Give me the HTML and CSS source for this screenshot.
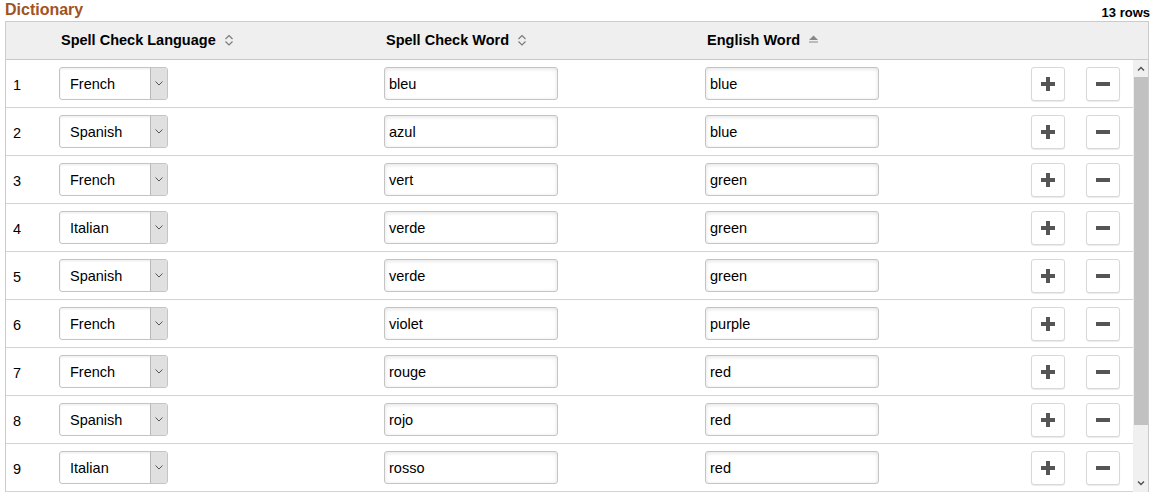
FILE: index.html
```html
<!DOCTYPE html>
<html>
<head>
<meta charset="utf-8">
<link rel="stylesheet" href="styles.css">
</head>
<body>
<div class="page">
  <div class="titlebar">
    <h1 class="title">Dictionary</h1>
    <span class="count">13 rows</span>
  </div>
  <div class="grid">
    <div class="row head">
      <div class="c num"></div>
      <div class="c">Spell Check Language <svg class="sort" width="10" height="14" viewBox="0 0 10 14"><polyline points="1.5,6 5,2.5 8.5,6" fill="none" stroke="#777" stroke-width="1.1"/><polyline points="1.5,8.5 5,12 8.5,8.5" fill="none" stroke="#777" stroke-width="1.1"/></svg></div>
      <div class="c">Spell Check Word <svg class="sort" width="10" height="14" viewBox="0 0 10 14"><polyline points="1.5,6 5,2.5 8.5,6" fill="none" stroke="#777" stroke-width="1.1"/><polyline points="1.5,8.5 5,12 8.5,8.5" fill="none" stroke="#777" stroke-width="1.1"/></svg></div>
      <div class="c">English Word <svg class="sort" width="11" height="14" viewBox="0 0 11 14"><polygon points="1,7 5.5,2.5 10,7" fill="#888"/><line x1="1" y1="9" x2="10" y2="9" stroke="#888" stroke-width="1"/></svg></div>
      <div class="c"></div>
      <div class="c"></div>
    </div>
    <div class="body">
      <div class="rows" id="rows">
        <div class="row"><div class="c num">1</div><div class="c"><div class="sel"><span class="sv">French</span><span class="dd"><svg width="8" height="5" viewBox="0 0 8 5"><polyline points="0.5,0.5 4,4 7.5,0.5" fill="none" stroke="#555" stroke-width="1"/></svg></span></div></div><div class="c"><div class="inp">bleu</div></div><div class="c"><div class="inp">blue</div></div><div class="c"><div class="btn"><svg width="16" height="16" viewBox="0 0 16 16"><rect x="6" y="1" width="4" height="14" fill="#555"/><rect x="1" y="6" width="14" height="4" fill="#555"/></svg></div></div><div class="c"><div class="btn"><svg width="16" height="16" viewBox="0 0 16 16"><rect x="1" y="6" width="14" height="4" fill="#555"/></svg></div></div></div>
        <div class="row"><div class="c num">2</div><div class="c"><div class="sel"><span class="sv">Spanish</span><span class="dd"><svg width="8" height="5" viewBox="0 0 8 5"><polyline points="0.5,0.5 4,4 7.5,0.5" fill="none" stroke="#555" stroke-width="1"/></svg></span></div></div><div class="c"><div class="inp">azul</div></div><div class="c"><div class="inp">blue</div></div><div class="c"><div class="btn"><svg width="16" height="16" viewBox="0 0 16 16"><rect x="6" y="1" width="4" height="14" fill="#555"/><rect x="1" y="6" width="14" height="4" fill="#555"/></svg></div></div><div class="c"><div class="btn"><svg width="16" height="16" viewBox="0 0 16 16"><rect x="1" y="6" width="14" height="4" fill="#555"/></svg></div></div></div>
        <div class="row"><div class="c num">3</div><div class="c"><div class="sel"><span class="sv">French</span><span class="dd"><svg width="8" height="5" viewBox="0 0 8 5"><polyline points="0.5,0.5 4,4 7.5,0.5" fill="none" stroke="#555" stroke-width="1"/></svg></span></div></div><div class="c"><div class="inp">vert</div></div><div class="c"><div class="inp">green</div></div><div class="c"><div class="btn"><svg width="16" height="16" viewBox="0 0 16 16"><rect x="6" y="1" width="4" height="14" fill="#555"/><rect x="1" y="6" width="14" height="4" fill="#555"/></svg></div></div><div class="c"><div class="btn"><svg width="16" height="16" viewBox="0 0 16 16"><rect x="1" y="6" width="14" height="4" fill="#555"/></svg></div></div></div>
        <div class="row"><div class="c num">4</div><div class="c"><div class="sel"><span class="sv">Italian</span><span class="dd"><svg width="8" height="5" viewBox="0 0 8 5"><polyline points="0.5,0.5 4,4 7.5,0.5" fill="none" stroke="#555" stroke-width="1"/></svg></span></div></div><div class="c"><div class="inp">verde</div></div><div class="c"><div class="inp">green</div></div><div class="c"><div class="btn"><svg width="16" height="16" viewBox="0 0 16 16"><rect x="6" y="1" width="4" height="14" fill="#555"/><rect x="1" y="6" width="14" height="4" fill="#555"/></svg></div></div><div class="c"><div class="btn"><svg width="16" height="16" viewBox="0 0 16 16"><rect x="1" y="6" width="14" height="4" fill="#555"/></svg></div></div></div>
        <div class="row"><div class="c num">5</div><div class="c"><div class="sel"><span class="sv">Spanish</span><span class="dd"><svg width="8" height="5" viewBox="0 0 8 5"><polyline points="0.5,0.5 4,4 7.5,0.5" fill="none" stroke="#555" stroke-width="1"/></svg></span></div></div><div class="c"><div class="inp">verde</div></div><div class="c"><div class="inp">green</div></div><div class="c"><div class="btn"><svg width="16" height="16" viewBox="0 0 16 16"><rect x="6" y="1" width="4" height="14" fill="#555"/><rect x="1" y="6" width="14" height="4" fill="#555"/></svg></div></div><div class="c"><div class="btn"><svg width="16" height="16" viewBox="0 0 16 16"><rect x="1" y="6" width="14" height="4" fill="#555"/></svg></div></div></div>
        <div class="row"><div class="c num">6</div><div class="c"><div class="sel"><span class="sv">French</span><span class="dd"><svg width="8" height="5" viewBox="0 0 8 5"><polyline points="0.5,0.5 4,4 7.5,0.5" fill="none" stroke="#555" stroke-width="1"/></svg></span></div></div><div class="c"><div class="inp">violet</div></div><div class="c"><div class="inp">purple</div></div><div class="c"><div class="btn"><svg width="16" height="16" viewBox="0 0 16 16"><rect x="6" y="1" width="4" height="14" fill="#555"/><rect x="1" y="6" width="14" height="4" fill="#555"/></svg></div></div><div class="c"><div class="btn"><svg width="16" height="16" viewBox="0 0 16 16"><rect x="1" y="6" width="14" height="4" fill="#555"/></svg></div></div></div>
        <div class="row"><div class="c num">7</div><div class="c"><div class="sel"><span class="sv">French</span><span class="dd"><svg width="8" height="5" viewBox="0 0 8 5"><polyline points="0.5,0.5 4,4 7.5,0.5" fill="none" stroke="#555" stroke-width="1"/></svg></span></div></div><div class="c"><div class="inp">rouge</div></div><div class="c"><div class="inp">red</div></div><div class="c"><div class="btn"><svg width="16" height="16" viewBox="0 0 16 16"><rect x="6" y="1" width="4" height="14" fill="#555"/><rect x="1" y="6" width="14" height="4" fill="#555"/></svg></div></div><div class="c"><div class="btn"><svg width="16" height="16" viewBox="0 0 16 16"><rect x="1" y="6" width="14" height="4" fill="#555"/></svg></div></div></div>
        <div class="row"><div class="c num">8</div><div class="c"><div class="sel"><span class="sv">Spanish</span><span class="dd"><svg width="8" height="5" viewBox="0 0 8 5"><polyline points="0.5,0.5 4,4 7.5,0.5" fill="none" stroke="#555" stroke-width="1"/></svg></span></div></div><div class="c"><div class="inp">rojo</div></div><div class="c"><div class="inp">red</div></div><div class="c"><div class="btn"><svg width="16" height="16" viewBox="0 0 16 16"><rect x="6" y="1" width="4" height="14" fill="#555"/><rect x="1" y="6" width="14" height="4" fill="#555"/></svg></div></div><div class="c"><div class="btn"><svg width="16" height="16" viewBox="0 0 16 16"><rect x="1" y="6" width="14" height="4" fill="#555"/></svg></div></div></div>
        <div class="row"><div class="c num">9</div><div class="c"><div class="sel"><span class="sv">Italian</span><span class="dd"><svg width="8" height="5" viewBox="0 0 8 5"><polyline points="0.5,0.5 4,4 7.5,0.5" fill="none" stroke="#555" stroke-width="1"/></svg></span></div></div><div class="c"><div class="inp">rosso</div></div><div class="c"><div class="inp">red</div></div><div class="c"><div class="btn"><svg width="16" height="16" viewBox="0 0 16 16"><rect x="6" y="1" width="4" height="14" fill="#555"/><rect x="1" y="6" width="14" height="4" fill="#555"/></svg></div></div><div class="c"><div class="btn"><svg width="16" height="16" viewBox="0 0 16 16"><rect x="1" y="6" width="14" height="4" fill="#555"/></svg></div></div></div>
      </div>
      <div class="sbar">
        <div class="sarrow"><svg width="8" height="5" viewBox="0 0 8 5"><polyline points="1,4.5 4,1.5 7,4.5" fill="none" stroke="#505050" stroke-width="1.4"/></svg></div>
        <div class="strack"><div class="sthumb"></div></div>
        <div class="sarrow"><svg width="8" height="5" viewBox="0 0 8 5"><polyline points="1,0.5 4,3.5 7,0.5" fill="none" stroke="#505050" stroke-width="1.4"/></svg></div>
      </div>
    </div>
  </div>
</div>
</body>
</html>
```

FILE: styles.css
```css
* { box-sizing: border-box; }
html, body { margin: 0; padding: 0; background: #fff; }
body {
  font-family: "Liberation Sans", Arial, sans-serif;
  color: #000;
  overflow: hidden;
}
.page {
  padding-left: 5px;
  width: 1149px;
}
.titlebar {
  height: 21px;
  display: flex;
  justify-content: space-between;
  align-items: flex-start;
}
.title {
  margin: 0;
  font-size: 16px;
  line-height: 19px;
  font-weight: bold;
  color: #a0531f;
}
.count {
  font-size: 13px;
  font-weight: bold;
  margin-top: 5px;
  line-height: 16px;
  margin-right: -1px;
}
.grid {
  border: 1px solid #cbcbcb;
  border-bottom: none;
  width: 1144px;
}
.row {
  display: grid;
  grid-template-columns: 53px 325px 321px 326px 55px 47px;
  height: 48px;
  border-bottom: 1px solid #d4d4d4;
  align-items: center;
  font-size: 14.5px;
}
.row.head {
  height: 38px;
  background: #efefef;
  border-bottom: 1px solid #c8c8c8;
  font-weight: bold;
  padding-bottom: 2px;
  grid-template-columns: 53px 325px 321px 327px 55px 61px;
}
.head .c {
  padding-left: 2px;
  display: flex;
  align-items: center;
  white-space: nowrap;
}
.sort { margin-left: 8px; }
.c.num { padding-left: 7px; padding-top: 2px; }
.body {
  display: flex;
  height: 432px;
  overflow: hidden;
}
.rows { width: 1127px; }
.sel {
  width: 109px;
  height: 33px;
  border: 1px solid #c4c4c4;
  border-radius: 3px;
  display: flex;
  box-shadow: inset 0 1px 3px rgba(0,0,0,0.08);
  background: #fff;
  overflow: hidden;
}
.sv {
  flex: 1;
  padding-left: 10px;
  line-height: 33px;
}
.dd {
  width: 17px;
  background: #e0e0e0;
  border-left: 1px solid #b8b8b8;
  display: flex;
  align-items: center;
  justify-content: center;
}
.inp {
  width: 174px;
  height: 33px;
  border: 1px solid #c4c4c4;
  border-radius: 3px;
  padding-left: 4px;
  line-height: 33px;
  box-shadow: inset 0 1px 4px rgba(0,0,0,0.12);
}
.btn {
  width: 34px;
  height: 34px;
  border: 1px solid #d8d8d8;
  border-radius: 3px;
  background: #fff;
  box-shadow: 0 1px 1px rgba(0,0,0,0.08);
  display: flex;
  align-items: center;
  justify-content: center;
}
.sbar {
  width: 15px;
  background: #f0f0f0;
  display: flex;
  flex-direction: column;
}
.sarrow {
  height: 17px;
  display: flex;
  align-items: center;
  justify-content: center;
}
.strack { flex: 1; padding: 0 0 0 1px; }
.sthumb {
  height: 348px;
  background: #c1c1c1;
}
```
